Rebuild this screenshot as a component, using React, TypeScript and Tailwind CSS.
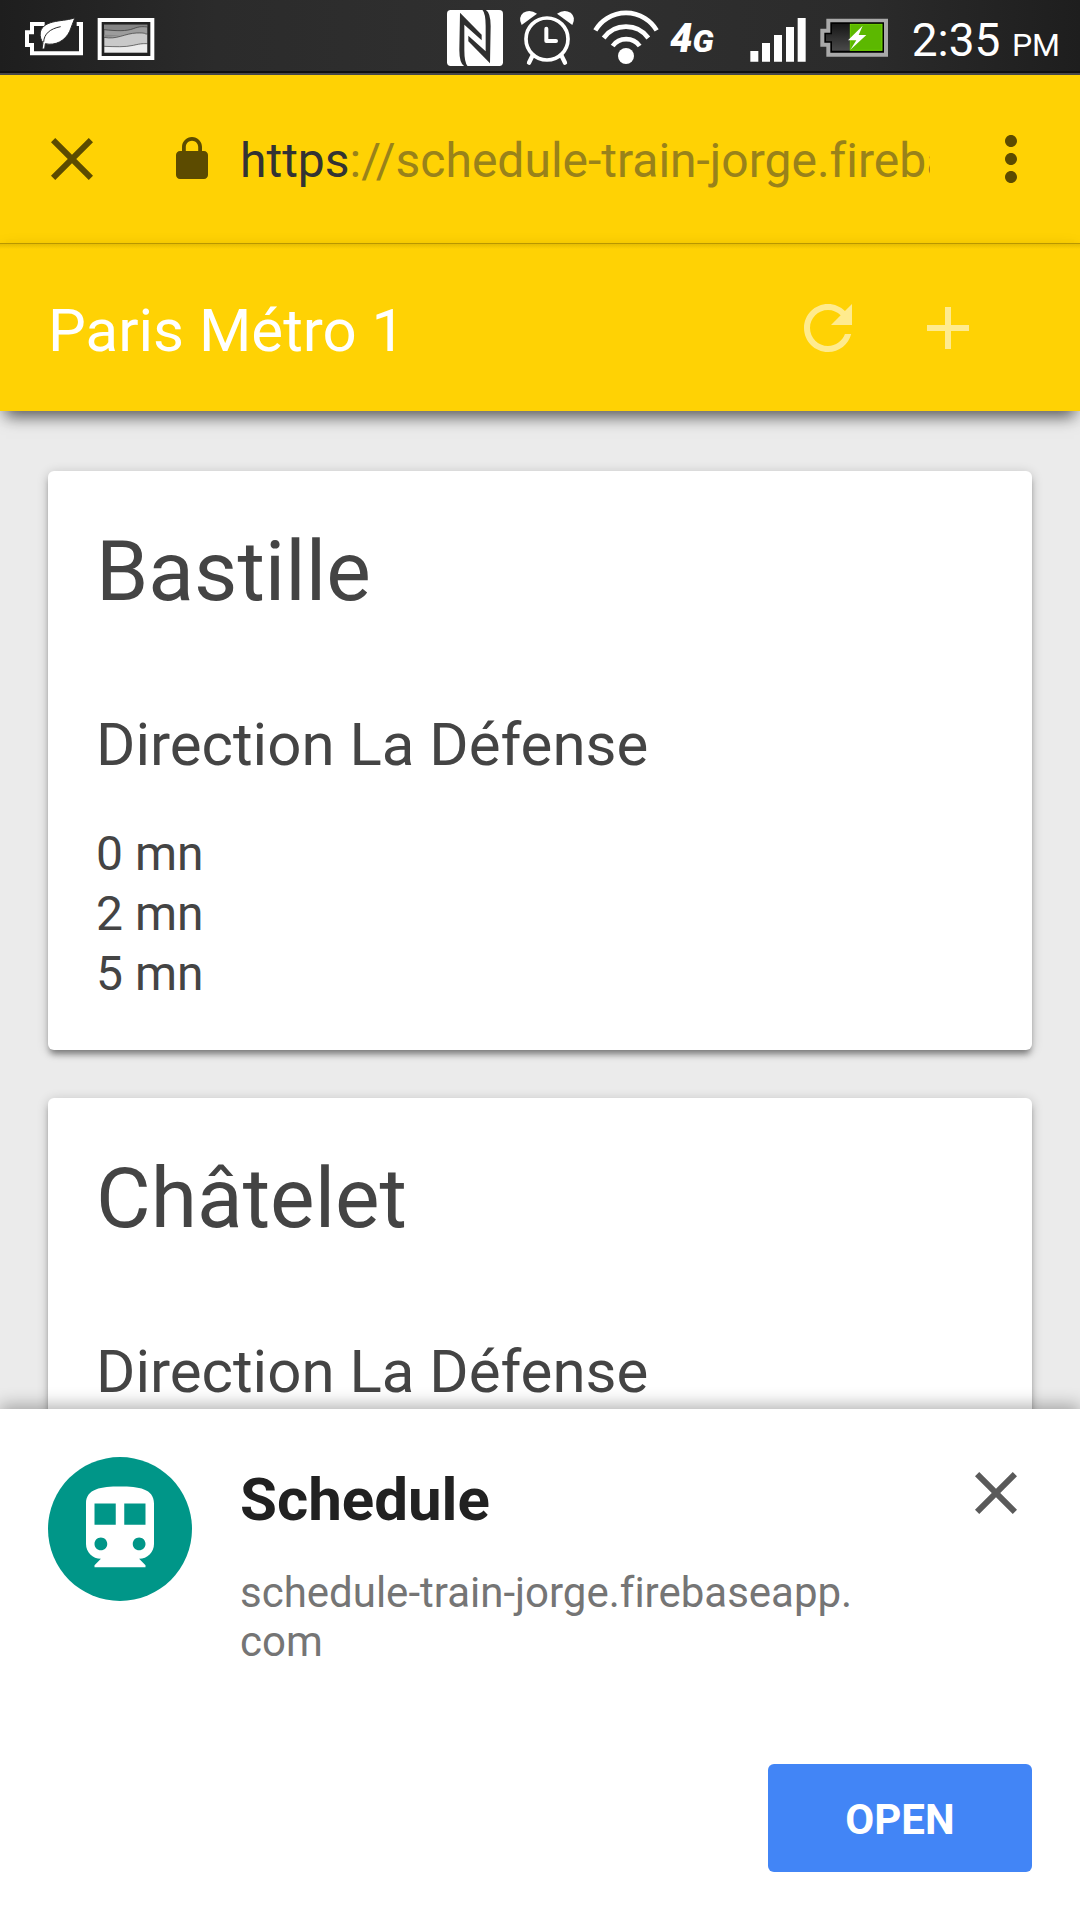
import type { ReactNode } from "react";

type Station = { name: string; direction: string; waits: string[] };

const stations: Station[] = [
  { name: "Bastille", direction: "Direction La Défense", waits: ["0 mn", "2 mn", "5 mn"] },
  { name: "Châtelet", direction: "Direction La Défense", waits: [] },
];

function Glyph({ size = "size-[72px]", children }: { size?: string; children: ReactNode }) {
  return (
    <svg viewBox="0 0 24 24" fill="currentColor" aria-hidden="true" className={`${size} shrink-0`}>
      {children}
    </svg>
  );
}

function CloseGlyph() {
  return (
    <Glyph>
      <path d="M19 6.41L17.59 5 12 10.59 6.41 5 5 6.41 10.59 12 5 17.59 6.41 19 12 13.41 17.59 19 19 17.59 13.41 12z" />
    </Glyph>
  );
}

function EcoBatteryIcon() {
  return (
    <svg viewBox="60 0 204 216" className="h-[72px] w-[68px]" aria-hidden="true">
      <path d="M134 72H96V97H81V135H96V160H243V72H230" fill="none" stroke="#fff" strokeWidth="12" />
      <path
        d="M225 53C196 66 132 56 121 96C119 110 123 120 129 128L126 147H134L136 131C166 138 196 122 209 94C215 80 219 66 225 53Z"
        fill="#fff"
        stroke="#292929"
        strokeWidth="3"
      />
      <path d="M131 126C132 102 150 86 182 80" fill="none" stroke="#292929" strokeWidth="3" />
    </svg>
  );
}

function PictureIcon() {
  return (
    <svg viewBox="264 0 216 216" className="size-[72px]" aria-hidden="true">
      <rect x="299" y="60" width="158" height="114" fill="#222" stroke="#fff" strokeWidth="12" />
      <rect x="312" y="73" width="131" height="86" fill="#858585" />
      <path d="M312 89C350 93 380 94 400 86S430 80 443 81V159H312Z" fill="#9c9c9c" stroke="#333" strokeWidth="2" />
      <path d="M312 104L362 106L312 112Z" fill="#888" />
      <path d="M312 112C350 120 375 100 410 99S430 103 443 102V159H312Z" fill="#c9c9c9" stroke="#333" strokeWidth="2" />
      <path d="M312 139C345 140 375 142 400 136S430 131 443 131V159H312Z" fill="#ececec" stroke="#333" strokeWidth="2" />
      <rect x="310" y="71" width="135" height="90" fill="none" stroke="#222" strokeWidth="4" />
    </svg>
  );
}

function NfcIcon() {
  const fold = "M90 38L155 104V121L103 74V150Q103 188 113 199H103Q88 190 88 150Z";
  return (
    <svg viewBox="30 0 216 216" className="size-[72px]" aria-hidden="true">
      <rect x="51" y="30" width="168" height="168" rx="11" fill="#fff" />
      <g fill="#2f2f2f">
        <path d={fold} />
        <path d={fold} transform="rotate(180 135 114)" />
      </g>
    </svg>
  );
}

function AlarmIcon() {
  const side = "M275 75Q263 52 280 38Q300 26 321 41Z";
  return (
    <svg viewBox="246 0 216 216" className="size-[72px]" aria-hidden="true">
      <g fill="none" stroke="#fff" strokeLinecap="round" strokeLinejoin="round">
        <circle cx="351" cy="117" r="63" strokeWidth="11" />
        <path d="M349 86V123H378" strokeWidth="12" />
        <path d="M307 168L297 188M395 168L405 188" strokeWidth="13" />
      </g>
      <g fill="#fff">
        <path d={side} />
        <path d={side} transform="translate(702 0) scale(-1 1)" />
      </g>
    </svg>
  );
}

function WifiIcon() {
  return (
    <svg viewBox="462 0 240 216" className="h-[72px] w-[80px]" aria-hidden="true">
      <g fill="none" stroke="#fff" strokeWidth="14">
        <path d="M496 91A107 107 0 0 1 680 91" />
        <path d="M521 114A83 83 0 0 1 655 114" />
        <path d="M548 138A50 50 0 0 1 629 138" />
      </g>
      <circle cx="588" cy="168" r="24" fill="#fff" />
    </svg>
  );
}

function SignalIcon() {
  return (
    <svg viewBox="42 0 216 216" className="ml-6 size-[72px]" aria-hidden="true">
      <path
        d="M61 153h24v32h-24zM96 129h24v56h-24zM132 105h24v80h-24zM168 81h24v104h-24zM203 54h24v131h-24z"
        fill="#fff"
      />
    </svg>
  );
}

function ChargingIcon() {
  return (
    <svg viewBox="258 0 240 216" className="h-[72px] w-[80px]" aria-hidden="true">
      <defs>
        <linearGradient id="cell" x1="0" y1="0" x2="0" y2="1">
          <stop offset="0" stopColor="#161616" />
          <stop offset="1" stopColor="#4a4a4a" />
        </linearGradient>
      </defs>
      <path d="M289 56H474V170H289V140H271V86H289Z" fill="#a9a9a9" />
      <path d="M301 67H462V158H301V128H283V98H301Z" fill="#000" />
      <path d="M306 72H360V152H306V124H288V103H306Z" fill="url(#cell)" />
      <rect x="361" y="73" width="95" height="78" fill="#5cb800" stroke="#72d800" strokeWidth="3" />
      <path d="M398 77L354 121H379L361 149L409 105H386Z" fill="#fff" />
    </svg>
  );
}

function StatusBar() {
  return (
    <header className="flex h-[75px] shrink-0 items-start justify-between border-b-2 border-[#484848] bg-[linear-gradient(90deg,#1e1e1e,#2b2b2b_20%,#303030_50%,#2b2b2b_80%,#1e1e1e)] px-5 text-white shadow-[inset_0_-2px_0_#111]">
      <div className="flex">
        <EcoBatteryIcon />
        <PictureIcon />
      </div>
      <div className="flex">
        <NfcIcon />
        <AlarmIcon />
        <WifiIcon />
        <span className="flex h-[72px] w-[56px] items-baseline justify-center text-[40px] leading-[78px] font-black italic">
          4<span className="text-[32px]">G</span>
        </span>
        <SignalIcon />
        <ChargingIcon />
        <time className="ml-4 text-[46px] leading-[80px]">
          2:35 <span className="text-[32px]">PM</span>
        </time>
      </div>
    </header>
  );
}

function AddressBar() {
  return (
    <div className="flex h-[168px] shrink-0 items-center bg-[#ffd204] pr-[33px] pl-9 text-[#5c4b00]">
      <button type="button" aria-label="Close tab">
        <CloseGlyph />
      </button>
      <div className="ml-[60px] flex min-w-0 flex-1 items-center gap-6">
        <Glyph size="size-12">
          <path d="M18 8h-1V6c0-2.76-2.24-5-5-5S7 3.24 7 6v2H6c-1.1 0-2 .9-2 2v10c0 1.1.9 2 2 2h12c1.1 0 2-.9 2-2V10c0-1.1-.9-2-2-2zM8.900 8V6c0-1.710 1.390-3.100 3.100-3.100s3.100 1.390 3.100 3.100v2z" />
        </Glyph>
        <a
          href="https://schedule-train-jorge.firebaseapp.com"
          className="min-w-0 flex-1 overflow-hidden pt-1 text-[48px] leading-[60px] whitespace-nowrap text-[#99821a]"
        >
          <span className="text-[#333]">https</span>://schedule-train-jorge.firebaseapp.com
        </a>
      </div>
      <button type="button" aria-label="More options" className="ml-[45px]">
        <Glyph>
          <path d="M12 8c1.100 0 2-.9 2-2s-.9-2-2-2-2 .9-2 2 .9 2 2 2zm0 2c-1.100 0-2 .9-2 2s.9 2 2 2 2-.9 2-2-.9-2-2-2zm0 6c-1.100 0-2 .9-2 2s.9 2 2 2 2-.9 2-2-.9-2-2-2z" />
        </Glyph>
      </button>
    </div>
  );
}

function AppBar() {
  return (
    <div className="relative z-10 flex h-[168px] shrink-0 items-center border-t border-[#b89700] bg-[#ffd204] bg-linear-to-b from-[#e6bd03] to-[#ffd204] to-[5px] pr-24 pl-12 text-white shadow-[0_12px_15px_-6px_rgba(0,0,0,0.55),0_4px_16px_-2px_rgba(0,0,0,0.15)]">
      <h1 className="flex-1 pt-1.5 text-[60px] leading-[72px]">Paris Métro 1</h1>
      <div className="flex gap-12 text-white/55">
        <button type="button" aria-label="Refresh">
          <Glyph>
            <path d="M17.65 6.35C16.2 4.9 14.21 4 12 4c-4.42 0-7.990 3.580-7.990 8s3.570 8 7.990 8c3.730 0 6.840-2.550 7.730-6h-2.080c-.82 2.330-3.040 4-5.650 4-3.310 0-6-2.690-6-6s2.690-6 6-6c1.660 0 3.140.69 4.220 1.780L13 11h7V4l-2.350 2.350z" />
          </Glyph>
        </button>
        <button type="button" aria-label="Add station">
          <Glyph>
            <path d="M19 13h-6v6h-2v-6H5v-2h6V5h2v6h6v2z" />
          </Glyph>
        </button>
      </div>
    </div>
  );
}

function StationCard({ station }: { station: Station }) {
  return (
    <article className="shrink-0 rounded-md bg-white px-12 pt-[51px] pb-[46px] text-[#444] shadow-[0_6px_6px_-2px_rgba(0,0,0,0.4),0_2px_12px_rgba(0,0,0,0.2)]">
      <h2 className="text-[84px] leading-[100px]">{station.name}</h2>
      <h3 className="mt-[87px] text-[60px] leading-[72px]">{station.direction}</h3>
      {station.waits.length > 0 && (
        <ul className="mt-[43px] text-[48px] leading-[60px]">
          {station.waits.map((wait) => (
            <li key={wait}>{wait}</li>
          ))}
        </ul>
      )}
    </article>
  );
}

function InstallSheet() {
  return (
    <section className="relative z-10 flex shrink-0 flex-col bg-white px-12 py-12 shadow-[0_-4px_16px_rgba(0,0,0,0.3)]">
      <div className="flex items-start">
        <div className="flex size-36 shrink-0 items-center justify-center rounded-full bg-[#009688] text-white">
          <Glyph size="size-[102px]">
            <path d="M12 2c-4.420 0-8 .5-8 4v9.500C4 17.430 5.570 19 7.500 19L6 20.500v.5h12v-.5L16.500 19c1.930 0 3.500-1.570 3.500-3.500V6c0-3.500-3.580-4-8-4zM7.500 17c-.83 0-1.500-.67-1.500-1.500S6.670 14 7.500 14s1.500.67 1.500 1.500S8.330 17 7.500 17zm3.500-6H6V6h5v5zm5.500 6c-.83 0-1.500-.67-1.500-1.500s.67-1.500 1.500-1.500 1.500.67 1.500 1.500-.67 1.500-1.500 1.500zm1.500-6h-5V6h5v5z" />
          </Glyph>
        </div>
        <div className="ml-12 min-w-0 flex-1">
          <h2 className="mt-2 text-[60px] leading-[70px] font-bold text-[#212121]">Schedule</h2>
          <p className="mt-[33px] text-[42px] leading-[49px] text-[#757575]">
            schedule-train-jorge.firebaseapp.
            <wbr />
            com
          </p>
        </div>
        <button type="button" aria-label="Dismiss" className="ml-12 text-[#5a5a5a]">
          <CloseGlyph />
        </button>
      </div>
      <button
        type="button"
        className="mt-[98px] h-[108px] w-[264px] self-end rounded-md bg-[#4285f6] pt-1 text-[42px] leading-[48px] font-bold text-white"
      >
        OPEN
      </button>
    </section>
  );
}

export default function App() {
  return (
    <div className="flex h-screen flex-col overflow-hidden bg-[#ebebeb] font-[Roboto,sans-serif] [font-variant-ligatures:none]">
      <StatusBar />
      <AddressBar />
      <AppBar />
      <main className="flex min-h-0 flex-1 flex-col gap-12 overflow-hidden px-12 pt-[60px]">
        {stations.map((station) => (
          <StationCard key={station.name} station={station} />
        ))}
      </main>
      <InstallSheet />
    </div>
  );
}
